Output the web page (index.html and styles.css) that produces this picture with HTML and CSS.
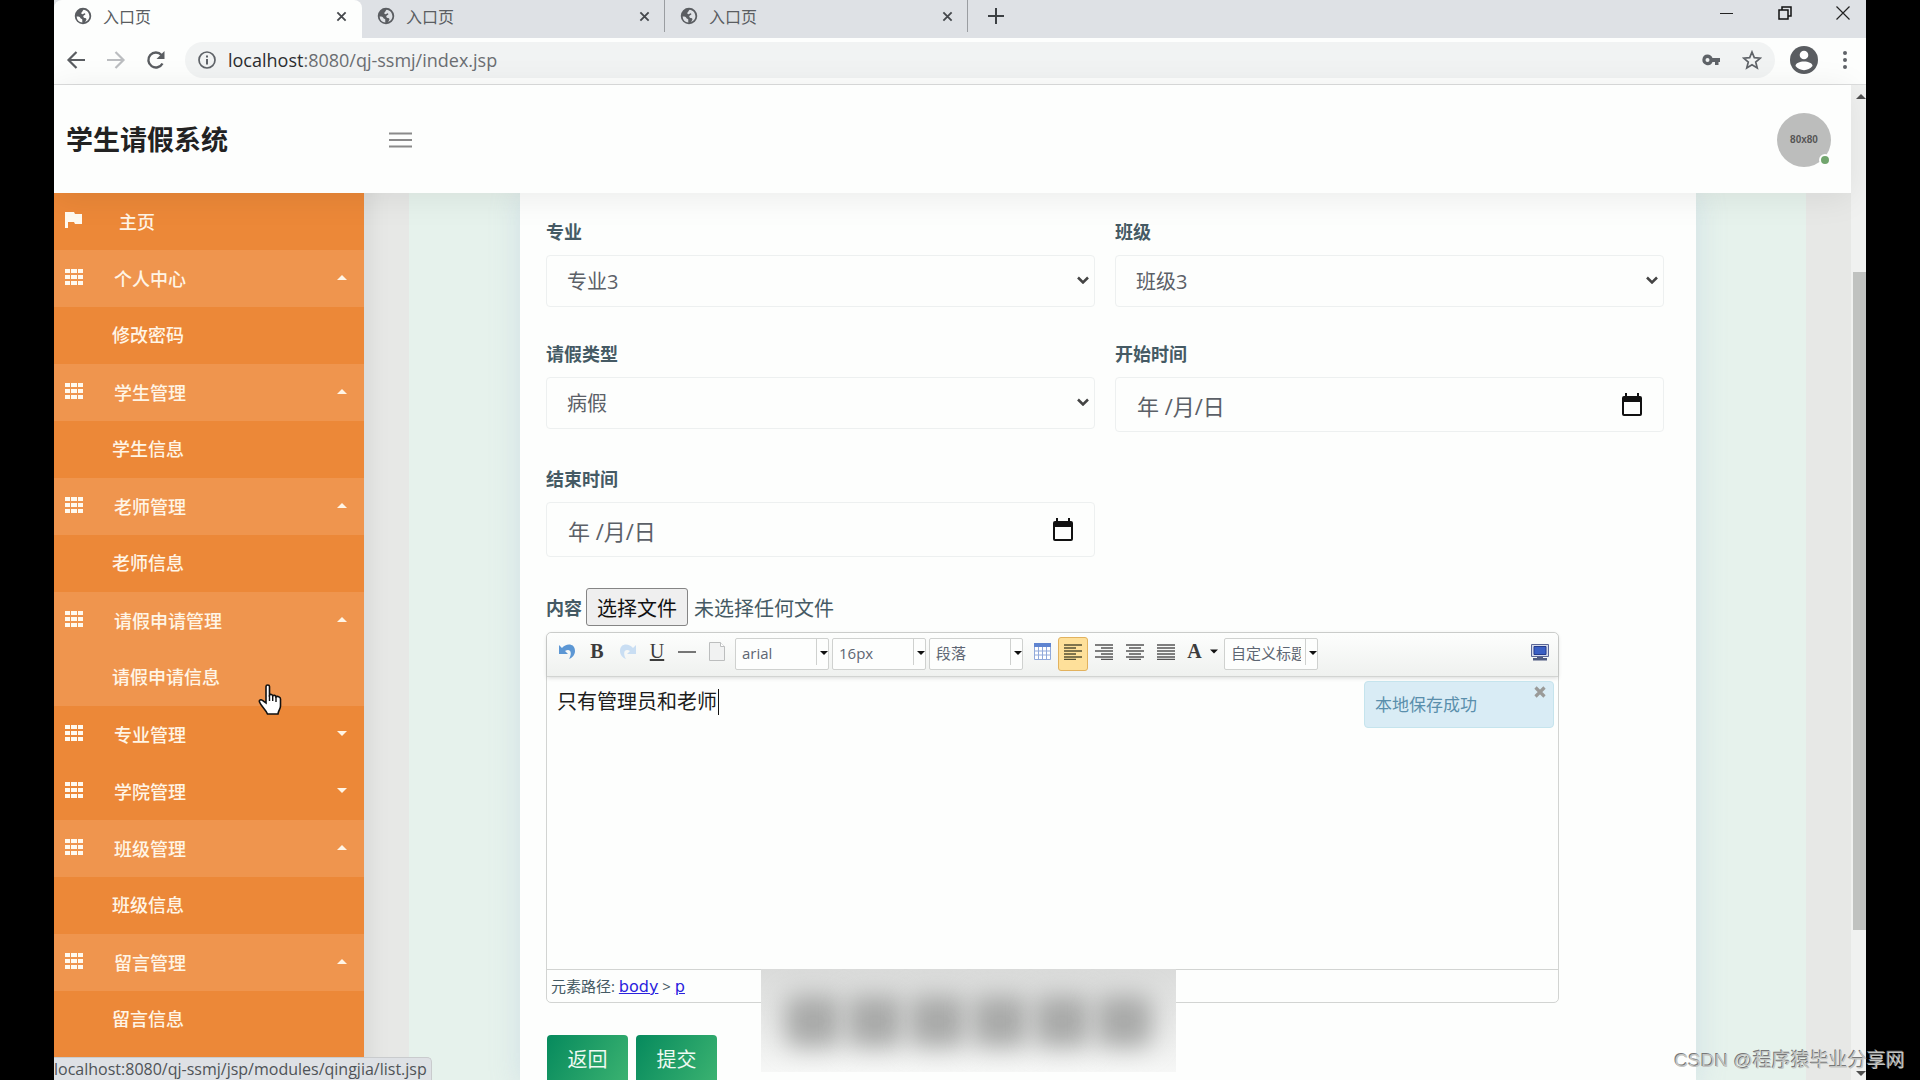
FILE: index.html
```html
<!DOCTYPE html>
<html lang="zh-CN">
<head>
<meta charset="utf-8">
<title>入口页</title>
<link rel="stylesheet" href="styles.css">
</head>
<body>
<svg class="defs" aria-hidden="true">
  <symbol id="globe" viewBox="0 0 24 24"><path fill="currentColor" d="M12 1a11 11 0 1 0 0 22 11 11 0 0 0 0-22zM3.500 12.500c3 0 4.500.5 5 2 .4 1.300 2 .8 2.500 2.200.3 1-.3 2.500.2 3.800A8.600 8.600 0 0 1 3.500 12.500zM20.600 13c-.5 3-2.600 5.800-5.600 7 .2-1.500 1.800-2.500 1.600-4-.3-1.500-2.600-1-3.600-2-1.200-1.200-.5-3 1-3.500 1.300-.5 1.500-1.500.5-2-1.500-.6-1.500 1-3 1-2 0-2.200-2-1-3 1.200-1 .8-2 2.500-3 4 .4 7.500 3.800 7.600 9.500z"/></symbol>
  <symbol id="cross" viewBox="0 0 12 12"><path d="M1.500 1.500l9 9M10.500 1.500l-9 9" stroke="currentColor" stroke-width="2" fill="none"/></symbol>
  <symbol id="grid" viewBox="0 0 18 16"><path fill="currentColor" d="M0 0h5v4H0zM6 0h6v4H6zM13 0h5v4h-5zM0 6h5v4H0zM6 6h6v4H6zM13 6h5v4h-5zM0 12h5v4H0zM6 12h6v4H6zM13 12h5v4h-5z"/></symbol>
  <symbol id="up" viewBox="0 0 10 5"><path fill="currentColor" d="M0 5l5-5 5 5z"/></symbol>
  <symbol id="down" viewBox="0 0 10 5"><path fill="currentColor" d="M0 0l5 5 5-5z"/></symbol>
  <symbol id="chevron" viewBox="0 0 12 8"><path d="M1 1.500l5 5 5-5" stroke="#444" stroke-width="2.500" fill="none"/></symbol>
  <symbol id="calendar" viewBox="0 0 22 24"><path fill="#111" d="M3 3h1V0h2v3h10V0h2v3h1a2 2 0 0 1 2 2v16a2 2 0 0 1-2 2H3a2 2 0 0 1-2-2V5a2 2 0 0 1 2-2zm0 6v12h16V9z"/></symbol>
</svg>
<div class="window">
  <div class="tabs">
    <div class="tab tab-active"><svg class="favicon"><use href="#globe"/></svg><span class="tab-title">入口页</span><button class="tab-close" aria-label="关闭"><svg><use href="#cross"/></svg></button></div>
    <div class="tab"><svg class="favicon"><use href="#globe"/></svg><span class="tab-title">入口页</span><button class="tab-close" aria-label="关闭"><svg><use href="#cross"/></svg></button></div>
    <div class="tab"><svg class="favicon"><use href="#globe"/></svg><span class="tab-title">入口页</span><button class="tab-close" aria-label="关闭"><svg><use href="#cross"/></svg></button></div>
    <button class="tab-new" aria-label="新标签页"><svg width="16" height="16" viewBox="0 0 16 16"><path d="M8 0v16M0 8h16" stroke="#3c4043" stroke-width="2"/></svg></button>
    <div class="window-controls">
      <button aria-label="最小化"><svg width="14" height="14" viewBox="0 0 14 14"><path d="M0 7.500h13" stroke="#222"/></svg></button>
      <button aria-label="还原"><svg width="14" height="14" viewBox="0 0 14 14"><path d="M1 4h9v9H1zM4 4V1h9v9h-3" stroke="#111" stroke-width="1.500" fill="none"/></svg></button>
      <button aria-label="关闭窗口"><svg width="14" height="14" viewBox="0 0 14 14"><path d="M.5.5l13 13M13.500.5l-13 13" stroke="#222" stroke-width="1.200"/></svg></button>
    </div>
  </div>

  <div class="browser-bar">
    <button aria-label="后退"><svg width="20" height="20" viewBox="0 0 20 20"><path d="M19 10H3M10.500 2L2.500 10l8 8" stroke="#5a5d61" stroke-width="2.200" fill="none"/></svg></button>
    <button aria-label="前进"><svg width="20" height="20" viewBox="0 0 20 20"><path d="M1 10h16M9.500 2l8 8-8 8" stroke="#bbbdc0" stroke-width="2.200" fill="none"/></svg></button>
    <button aria-label="刷新"><svg width="20" height="20" viewBox="0 0 20 20"><path d="M16.500 13.500A7.500 7.500 0 1 1 15.500 5" stroke="#5a5d61" stroke-width="2.400" fill="none"/><path d="M18.500 1v8h-8z" fill="#5a5d61"/></svg></button>
    <div class="omnibox">
      <svg width="18" height="18" viewBox="0 0 18 18"><circle cx="9" cy="9" r="8" stroke="#5f6368" stroke-width="1.700" fill="none"/><path d="M9 8v5.500M9 4.500v2" stroke="#5f6368" stroke-width="2"/></svg>
      <div class="url"><span class="host">localhost</span>:8080/qj-ssmj/index.jsp</div>
      <button aria-label="密码"><svg width="19" height="12" viewBox="0 0 19 12"><path fill="#5f6368" fill-rule="evenodd" d="M5.500.5a5.300 5.300 0 0 1 5 3.500H18v4h-1.500v3H13V8h-2.500a5.300 5.300 0 1 1-5-7.500zm0 3.500a2 2 0 1 0 0 4 2 2 0 0 0 0-4z"/></svg></button>
      <button aria-label="收藏"><svg width="20" height="20" viewBox="0 0 20 20"><path d="M10 2l2.300 5.600 6 .5-4.600 3.900 1.500 5.900L10 14.700l-5.200 3.200L6.300 12 1.700 8.100l6-.5z" stroke="#5f6368" stroke-width="1.700" fill="none"/></svg></button>
    </div>
    <button class="profile" aria-label="用户"><svg width="28" height="28" viewBox="0 0 28 28"><circle cx="14" cy="14" r="14" fill="#5a5d61"/><circle cx="14" cy="9" r="4.300" fill="#fff"/><path fill="#fff" d="M5.500 20c0-6 17-6 17 0-4 5.500-13 5.500-17 0z"/></svg></button>
    <button class="more" aria-label="更多"><svg width="4" height="18" viewBox="0 0 4 18"><g fill="#5f6368"><circle cx="2" cy="2" r="2"/><circle cx="2" cy="9" r="2"/><circle cx="2" cy="16" r="2"/></g></svg></button>
  </div>

  <div class="viewport">
    <div class="page">
      <header class="header">
        <h1 class="logo">学生请假系统</h1>
        <button class="burger" aria-label="菜单"><svg width="23" height="16" viewBox="0 0 23 16"><path d="M0 1.500h23M0 8h23M0 14.500h23" stroke="#8a8a8a" stroke-width="2"/></svg></button>
        <div class="avatar">80x80<span class="online"></span></div>
      </header>
      <div class="body">
        <nav class="sidebar">
          <a class="item home" href="#"><svg class="item-icon" viewBox="0 0 18 16"><path fill="currentColor" d="M0 0h9l1 2h7v10h-7l-1-2H3v6H0z"/></svg><span>主页</span></a>
          <a class="item open" href="#"><svg class="item-icon"><use href="#grid"/></svg><span>个人中心</span><svg class="caret"><use href="#up"/></svg></a>
          <a class="sub" href="#">修改密码</a>
          <a class="item open" href="#"><svg class="item-icon"><use href="#grid"/></svg><span>学生管理</span><svg class="caret"><use href="#up"/></svg></a>
          <a class="sub" href="#">学生信息</a>
          <a class="item open" href="#"><svg class="item-icon"><use href="#grid"/></svg><span>老师管理</span><svg class="caret"><use href="#up"/></svg></a>
          <a class="sub" href="#">老师信息</a>
          <a class="item open" href="#"><svg class="item-icon"><use href="#grid"/></svg><span>请假申请管理</span><svg class="caret"><use href="#up"/></svg></a>
          <a class="sub hovered" href="#">请假申请信息</a>
          <a class="item" href="#"><svg class="item-icon"><use href="#grid"/></svg><span>专业管理</span><svg class="caret"><use href="#down"/></svg></a>
          <a class="item" href="#"><svg class="item-icon"><use href="#grid"/></svg><span>学院管理</span><svg class="caret"><use href="#down"/></svg></a>
          <a class="item open" href="#"><svg class="item-icon"><use href="#grid"/></svg><span>班级管理</span><svg class="caret"><use href="#up"/></svg></a>
          <a class="sub" href="#">班级信息</a>
          <a class="item open" href="#"><svg class="item-icon"><use href="#grid"/></svg><span>留言管理</span><svg class="caret"><use href="#up"/></svg></a>
          <a class="sub" href="#">留言信息</a>
        </nav>
        <main class="main">
          <div class="panel">
            <form class="card">
              <div class="fields">
                <div class="field"><label for="major">专业</label><div class="control"><select id="major"><option>专业3</option></select><svg class="chevron"><use href="#chevron"/></svg></div></div>
                <div class="field"><label for="class">班级</label><div class="control"><select id="class"><option>班级3</option></select><svg class="chevron"><use href="#chevron"/></svg></div></div>
                <div class="field"><label for="type">请假类型</label><div class="control"><select id="type"><option>病假</option></select><svg class="chevron"><use href="#chevron"/></svg></div></div>
                <div class="field"><label for="start">开始时间</label><div class="control"><input id="start" type="text" value="年 /月/日"><button class="pick" type="button" aria-label="选择日期"><svg><use href="#calendar"/></svg></button></div></div>
                <div class="field"><label for="end">结束时间</label><div class="control"><input id="end" type="text" value="年 /月/日"><button class="pick" type="button" aria-label="选择日期"><svg><use href="#calendar"/></svg></button></div></div>
              </div>
              <div class="file-row"><span class="file-label">内容</span><button class="file-button" type="button">选择文件</button><span class="file-name">未选择任何文件</span></div>
              <div class="editor">
                <div class="tools">
                  <div class="group">
                    <button type="button" aria-label="撤销"><svg width="17" height="17" viewBox="0 0 17 17"><path fill="#5c97d4" d="M0 2l3 3C7 0 16 0 16 8c0 4-3 7-6 8 3-5 2-9-1-9-1 0-2 .5-3 1l3 3H0z"/></svg></button>
                    <button type="button" class="letter" aria-label="加粗"><b>B</b></button>
                    <button type="button" aria-label="重做"><svg width="17" height="17" viewBox="0 0 17 17"><path fill="#c9def3" d="M17 2l-3 3C10 0 1 0 1 8c0 4 3 7 6 8-3-5-2-9 1-9 1 0 2 .5 3 1l-3 3h9z"/></svg></button>
                    <button type="button" class="letter" aria-label="下划线"><u>U</u></button>
                    <button type="button" aria-label="分隔线"><svg width="18" height="18" viewBox="0 0 18 18"><path d="M0 9h18" stroke="#555" stroke-width="1.600"/></svg></button>
                    <button type="button" aria-label="清空"><svg width="16" height="19" viewBox="0 0 16 19"><path d="M.5.5h11l4 4v14H.5z" fill="#f1f2f2" stroke="#bcbebe"/><path d="M11.500.5v4h4" fill="#fff" stroke="#bcbebe"/></svg></button>
                  </div>
                  <div class="combos">
                    <div class="combo"><select aria-label="字体"><option>arial</option></select><svg class="arrow"><use href="#down"/></svg></div>
                    <div class="combo"><select aria-label="字号"><option>16px</option></select><svg class="arrow"><use href="#down"/></svg></div>
                    <div class="combo"><select aria-label="段落格式"><option>段落</option></select><svg class="arrow"><use href="#down"/></svg></div>
                  </div>
                  <div class="group aligned">
                    <button type="button" aria-label="表格"><svg width="17" height="17" viewBox="0 0 17 17"><path fill="#fff" stroke="#91a9da" d="M.5.500h16v16H.5zM.5 8h16M.5 12h16M4.500 4v12M8.500 4v12M12.500 4v12"/><path fill="#5f84d0" d="M0 0h17v4H0z"/></svg></button>
                    <button type="button" class="pressed" aria-label="左对齐"><svg width="18" height="16" viewBox="0 0 18 16"><path d="M0 1h18M0 4h12M0 7h18M0 10h12M0 13h18M0 15.500h12" stroke="#555035" stroke-width="1.400"/></svg></button>
                    <button type="button" aria-label="右对齐"><svg width="18" height="16" viewBox="0 0 18 16"><path d="M0 1h18M6 4h12M0 7h18M6 10h12M0 13h18M6 15.500h12" stroke="#555" stroke-width="1.400"/></svg></button>
                    <button type="button" aria-label="居中"><svg width="18" height="16" viewBox="0 0 18 16"><path d="M0 1h18M3 4h12M0 7h18M3 10h12M0 13h18M3 15.500h12" stroke="#555" stroke-width="1.400"/></svg></button>
                    <button type="button" aria-label="两端对齐"><svg width="18" height="16" viewBox="0 0 18 16"><path d="M0 1h18M0 4h18M0 7h18M0 10h18M0 13h18M0 15.500h18" stroke="#555" stroke-width="1.400"/></svg></button>
                    <button type="button" class="letter color" aria-label="字体颜色"><b>A</b><svg width="8" height="5"><use href="#down"/></svg></button>
                  </div>
                  <div class="combo"><select aria-label="自定义标题"><option>自定义标题</option></select><svg class="arrow"><use href="#down"/></svg></div>
                  <button type="button" class="fullscreen" aria-label="全屏"><svg width="18" height="17" viewBox="0 0 18 17"><path fill="#d7dcec" stroke="#5a6696" d="M.5.500h17v12H.5z"/><path fill="#3a5fc4" stroke="#253c8c" d="M3 2.500h12v8H3z"/><path fill="#4f5b80" d="M6 13h6v1h4v2.500H2V14h4z"/></svg></button>
                </div>
                <div class="content" role="textbox" contenteditable="true" aria-label="内容">只有管理员和老师<span class="text-caret"></span></div>
                <div class="notice" role="status">本地保存成功<button type="button" aria-label="关闭提示"><svg width="12" height="12" viewBox="0 0 12 12"><path d="M1.500 1.500l9 9M10.500 1.500l-9 9" stroke="#9a9a98" stroke-width="3.200"/></svg></button></div>
                <div class="path">元素路径: <a href="#">body</a> &gt; <a href="#">p</a></div>
              </div>
              <div class="actions"><button type="button">返回</button><button type="button">提交</button></div>
            </form>
          </div>
        </main>
      </div>
    </div>
    <div class="scrollbar"><svg class="scroll-arrow"><use href="#up"/></svg><div class="thumb"></div><svg class="scroll-arrow"><use href="#down"/></svg></div>
  </div>

  <div class="status-bar">localhost:8080/qj-ssmj/jsp/modules/qingjia/list.jsp</div>
  <div class="smudge"><i></i><i></i><i></i><i></i><i></i><i></i></div>
  <svg class="pointer" viewBox="0 0 24 32"><path d="M8 2.500c0-2 3.500-2 3.500 0V11c1-1 3-.8 3.200.8 1-.9 3-.6 3.300 1 1.200-.8 4.500-.3 4.500 2.200V22c0 3-2 4-2.500 8H9.500C8 26 3 22 1.500 18c-.7-2 1.500-3 3-1.500L8 19z" fill="#fff" stroke="#111" stroke-width="1.600"/><path d="M11.500 11v6M14.700 12v5M18 13v5" stroke="#111" stroke-width="1.400"/></svg>
</div>
<div class="watermark">CSDN @程序猿毕业分享网</div>
</body>
</html>
```
FILE: styles.css
```css
* { box-sizing: border-box; }

body {
  margin: 0;
  height: 100vh;
  overflow: hidden;
  position: relative;
  background: #000;
  padding: 0 54px;
  font-family: "Open Sans", "Noto Sans CJK SC", sans-serif;
  color: #455a64;
}

button {
  display: flex;
  align-items: center;
  justify-content: center;
  padding: 0;
  border: 0;
  background: none;
  color: inherit;
  font: inherit;
}

a { color: inherit; text-decoration: none; }

.defs { position: absolute; width: 0; height: 0; }

.window {
  position: relative;
  display: flex;
  flex-direction: column;
  height: 100%;
  overflow: hidden;
  background: #fdfefd;
}

/* browser frame */
.tabs { display: flex; height: 38px; flex: none; background: #dee1e5; }

.tab {
  display: flex;
  align-items: center;
  width: 303px;
  height: 32px;
  padding: 0 13px 0 15px;
  border-right: 1px solid #9a9da1;
  font-size: 16px;
  color: #5a5d61;
}

.tab-active {
  width: 308px;
  height: 38px;
  padding: 0 14px 6px 20px;
  border: 0;
  border-radius: 8px 8px 0 0;
  background: #fdfefd;
}

.favicon { width: 18px; height: 18px; color: #5a5d61; }
.tab-title { flex: 1; margin-left: 11px; }
.tab-close { width: 14px; height: 20px; color: #45484c; }
.tab-close svg { width: 11px; height: 11px; }
.tab-new { width: 56px; height: 32px; }
.window-controls { display: flex; height: 26px; margin-left: auto; }
.window-controls button { width: 58px; }
.window-controls button:last-child { margin-right: -6px; }

.browser-bar {
  display: flex;
  align-items: center;
  flex: none;
  height: 47px;
  padding: 0 19px 2px 2px;
  border-bottom: 1px solid #dcdddd;
}

.browser-bar > button { width: 40px; height: 36px; }

.omnibox {
  display: flex;
  align-items: center;
  flex: 1;
  height: 36px;
  margin-left: 9px;
  padding: 0 11px 0 13px;
  border-radius: 18px;
  background: #f1f3f3;
}

.url { flex: 1; margin-left: 12px; font-size: 18px; line-height: 24px; color: #6b6e72; }
.host { color: #2b2d30; }
.omnibox button { width: 24px; height: 24px; margin-left: 17px; }
.browser-bar .profile { margin: 0 19px 0 9px; }
.browser-bar .more { width: 4px; }

/* page */
.viewport { display: flex; flex: 1; min-height: 0; }
.page { display: flex; flex: 1; flex-direction: column; min-width: 0; min-height: 0; }

.scrollbar {
  display: flex;
  flex-direction: column;
  width: 15px;
  padding: 9px 0 4px;
  background: #f0f1f0;
}

.scroll-arrow { flex: none; width: 10px; height: 5px; margin-left: 5px; color: #505050; }
.thumb { flex: none; height: 67%; width: 13px; margin: 173px 0 auto 2px; background: #c0c2c0; }

.header {
  position: relative;
  z-index: 1;
  display: flex;
  align-items: center;
  flex: none;
  height: 108px;
  padding: 2px 20px 0 12px;
  background: #fdfefd;
  box-shadow: 0 4px 32px rgba(0, 0, 0, .08);
}

.logo { width: 323px; margin: 0; font-size: 27px; line-height: 36px; color: #222; }

.avatar {
  position: relative;
  width: 54px;
  height: 54px;
  margin-left: auto;
  border-radius: 50%;
  background: #bcbdbc;
  font: bold 10px/54px "Liberation Sans", sans-serif;
  text-align: center;
  color: #555;
}

.online {
  position: absolute;
  right: 0;
  bottom: 1px;
  width: 12px;
  height: 12px;
  border: 2px solid #fdfefd;
  border-radius: 50%;
  background: #71a56d;
}

.body { display: flex; flex: 1; min-height: 0; }

.sidebar { flex: none; width: 310px; overflow: hidden; background: #ec8838; font-size: 18px; font-weight: 500; color: #fff5e6; }

.item { display: flex; align-items: center; height: 57px; padding: 0 17px 2px 11px; }
.item-icon { width: 18px; height: 16px; margin: -2px 31px 0 0; color: #fffaf0; }
.home .item-icon { margin-right: 36px; }
.caret { width: 10px; height: 5px; margin: -1px 0 0 auto; }
.sub { display: flex; align-items: center; height: 57px; padding: 0 0 4px 58px; }
.open, .hovered { background: #ef954e; }

.main { display: flex; flex: 1; min-width: 0; padding: 0 45px; background: #e7e8e6; box-shadow: inset 24px 0 24px -20px rgba(0, 0, 0, .08); }
.panel { flex: 1; min-width: 0; padding: 0 110px 0 111px; background: #e6f2ec; }

.card {
  min-height: 100%;
  padding: 27px 32px 0 26px;
  background: #fdfefd;
  box-shadow: 0 0 28px rgba(150, 180, 215, .28);
}

.fields { display: grid; grid-template-columns: 1fr 1fr; gap: 35px 20px; align-items: start; }
.field label { display: block; margin-bottom: 11px; font-size: 18px; line-height: 24px; font-weight: 600; }
.control { position: relative; }

.control select,
.control input {
  display: block;
  width: 100%;
  height: 52px;
  padding: 0 20px;
  border: 1px solid #edf0f0;
  border-radius: 4px;
  appearance: none;
  background: #fdfefd;
  font: 20px "Open Sans", "Noto Sans CJK SC", sans-serif;
  color: #5b6067;
}

.control input { height: 55px; padding: 0 21px; font-size: 22px; }
.chevron { position: absolute; right: 6px; top: 21px; width: 12px; height: 8px; }
.pick { position: absolute; right: 21px; top: 16px; width: 22px; height: 24px; }
.pick svg { width: 22px; height: 24px; }

.file-row { display: flex; align-items: center; height: 38px; margin: 31px 0 6px; font-size: 20px; }
.file-label { width: 40px; font-size: 18px; font-weight: 600; }
.file-button { width: 102px; height: 38px; margin-right: 6px; border: 1px solid #858585; border-radius: 3px; background: #efefef; color: #111; }

.editor { position: relative; width: 91%; max-width: 1013px; border: 1px solid #d2d4d2; border-radius: 5px; }

.tools {
  display: flex;
  align-items: center;
  height: 44px;
  padding: 0 9px 2px 5px;
  border-bottom: 1px solid #d2d4d2;
  border-radius: 5px 5px 0 0;
  background: linear-gradient(#fdfefd, #eff1ef);
  box-shadow: 0 1px 4px rgba(0, 0, 0, .15);
}

.group, .combos { display: flex; align-items: center; }
.group button { width: 30px; height: 34px; padding-bottom: 4px; border: 1px solid transparent; border-radius: 3px; }
.combos { gap: 3px; margin: 0 4px 0 3px; }
.aligned { gap: 1px; margin-right: 1px; }
.aligned .color { width: 41px; gap: 8px; }
.group .letter { font-family: "Liberation Serif", serif; font-size: 20px; color: #3c3c3c; }
.color svg { color: #111; }
.group .pressed { border-color: #e2b25e; background: #fee09a; }
.fullscreen { margin: 0 0 3px auto; }

.combo { position: relative; }
.combo select {
  display: block;
  width: 94px;
  height: 32px;
  padding: 0 16px 2px 6px;
  border: 1px solid #cfd1cf;
  border-radius: 2px;
  appearance: none;
  background: linear-gradient(#cfd1cf, #cfd1cf) no-repeat right 11px top / 1px 26px #fdfefd;
  font: 15px "Open Sans", "Noto Sans CJK SC", sans-serif;
  color: #5d6673;
}
.arrow { position: absolute; right: 1px; top: 13px; width: 8px; height: 4px; color: #111; }

.content { height: 292px; padding: 12px 10px; outline: 0; font-size: 20px; line-height: 26px; color: #1c1c1c; }
.text-caret { display: inline-block; width: 1px; height: 26px; margin-left: 1px; vertical-align: top; background: #111; }

.notice {
  position: absolute;
  top: 48px;
  right: 4px;
  width: 190px;
  height: 47px;
  padding-left: 10px;
  border: 1px solid #c5e4ed;
  border-radius: 4px;
  background: #d9ecf5;
  font-size: 17px;
  line-height: 46px;
  color: #5a8fac;
}
.notice button { position: absolute; top: 4px; right: 7px; }

.path { height: 33px; padding-left: 4px; border-top: 1px solid #d2d4d2; font-size: 15px; line-height: 32px; }
.path a { font-family: "DejaVu Sans", sans-serif; font-size: 16px; color: #2a22dd; text-decoration: underline; }

.actions { display: flex; gap: 8px; margin-top: 32px; padding-left: 1px; }
.actions button { width: 81px; height: 50px; padding-bottom: 4px; border-radius: 4px; background: linear-gradient(120deg, #068a5d, #3cb371); font-size: 20px; color: #eefaf2; }

/* overlays */
.status-bar {
  position: absolute;
  left: 0;
  bottom: 0;
  z-index: 2;
  width: 378px;
  height: 23px;
  border: 1px solid #c9cbcd;
  border-width: 1px 1px 0 0;
  border-radius: 0 5px 0 0;
  background: #dee1e5;
  font-size: 16px;
  line-height: 22px;
  white-space: nowrap;
  color: #4f5357;
}

.smudge {
  position: absolute;
  left: 707px;
  bottom: 8px;
  z-index: 2;
  display: flex;
  gap: 6px;
  width: 415px;
  height: 103px;
  padding: 26px 24px 25px;
  overflow: hidden;
  background: linear-gradient(#dadbda, #e6e7e6 45%, #f6f7f6);
}
.smudge i { flex: 1; border-radius: 12px; background: #a8a9a8; filter: blur(12px); }

.pointer { position: absolute; left: 204px; top: 684px; z-index: 2; width: 24px; height: 32px; }

.watermark {
  position: absolute;
  right: 15px;
  bottom: 5px;
  z-index: 3;
  font: 19px/28px "Liberation Sans", "Noto Sans CJK SC", sans-serif;
  color: #c4c6c4;
  text-shadow: -1px -1px 0 #777;
}
```
